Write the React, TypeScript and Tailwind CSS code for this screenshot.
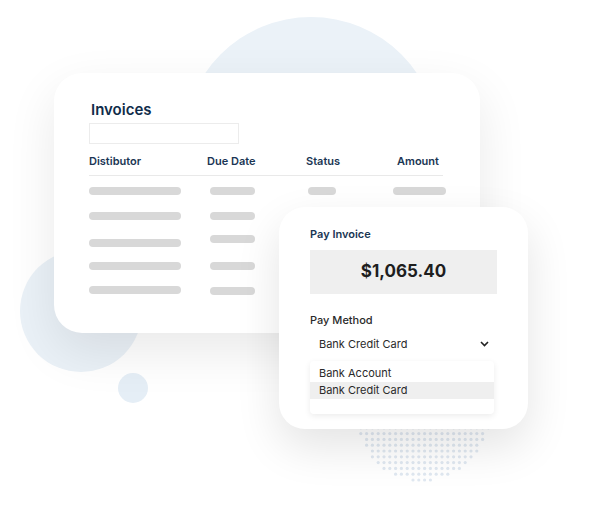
import React from "react";

type Row = { wrap: string; d: string; due: string; st: string; am: string };

const rows: Row[] = [
  { wrap: "mt-[11px]", d: "mt-0", due: "mt-0", st: "mt-0", am: "mt-0" },
  { wrap: "mt-[17px]", d: "mt-0", due: "mt-0", st: "mt-0", am: "mt-0" },
  { wrap: "mt-[15px]", d: "mt-[4px]", due: "mt-0", st: "mt-0", am: "mt-0" },
  { wrap: "mt-[15px]", d: "mt-0", due: "mt-0", st: "mt-0", am: "mt-0" },
  { wrap: "mt-[16px]", d: "mt-0", due: "mt-[1px]", st: "mt-[1px]", am: "mt-[1px]" },
];

function Dots() {
  const dots: React.ReactElement[] = [];
  const cx = 70;
  const cy = 52;
  const r = 67;
  for (let y = 2; y < 140; y += 5.8) {
    for (let x = 2; x < 140; x += 5.8) {
      const dx = x - cx;
      const dy = y - cy;
      if (dx * dx + dy * dy <= r * r) {
        dots.push(<circle key={`${x}-${y}`} cx={x} cy={y} r={1.6} fill="#e0e8f1" />);
      }
    }
  }
  return (
    <svg width="140" height="140" viewBox="0 0 140 140">
      {dots}
    </svg>
  );
}

const bar = "h-[8px] rounded-full bg-[#d8d8d8]";

export default function App() {
  return (
    <div
      className="relative w-[616px] h-[511px] overflow-hidden bg-white pl-[54px] pt-[73px]"
      style={{ fontFamily: "Inter, 'Noto Sans', sans-serif" }}
    >
      {/* decorative background shapes */}
      <div className="absolute left-[183px] top-[17px] w-[256px] h-[256px] rounded-full bg-[#ebf2f8]" />
      <div className="absolute left-[20px] top-[250px] w-[122px] h-[122px] rounded-full bg-[#eaf1f7]" />
      <div className="absolute left-[118px] top-[373px] w-[30px] h-[30px] rounded-full bg-[#e5eef6]" />
      <div className="absolute left-[353px] top-[362px]">
        <Dots />
      </div>

      {/* Invoices card */}
      <div className="relative w-[426px] h-[260px] rounded-[28px] bg-white shadow-[0_18px_50px_rgba(0,0,0,0.09)] pl-[35px] pt-[27px]">
        <div className="text-[15px] leading-[20px] font-semibold text-[#0f2c4a] ml-[2px]">Invoices</div>
        <div className="mt-[3px] w-[150px] h-[21px] border border-[#ececec]" />
        <div className="mt-[10px] w-[354px] grid grid-cols-[118px_99px_91px_1fr] text-[11px] leading-[14px] font-semibold text-[#1a3654] pb-[7px] border-b border-[#e9e9e9]">
          <span>Distibutor</span>
          <span>Due Date</span>
          <span>Status</span>
          <span>Amount</span>
        </div>
        <div className="flex flex-col w-[354px]">
          {rows.map((r, i) => (
            <div key={i} className={`grid grid-cols-[118px_99px_91px_1fr] items-start ${r.wrap}`}>
              <div className={`${bar} w-[92px] ${r.d}`} />
              <div className={`${bar} w-[45px] ml-[3px] ${r.due}`} />
              <div className={`${bar} w-[28px] ml-[2px] ${r.st}`} />
              <div className={`${bar} w-[53px] -ml-[4px] ${r.am}`} />
            </div>
          ))}
        </div>
      </div>

      {/* Pay invoice card */}
      <div className="absolute left-[279px] top-[207px] w-[249px] h-[222px] rounded-[26px] bg-white shadow-[0_18px_45px_rgba(0,0,0,0.11)] px-[31px] pt-[20px]">
        <div className="text-[11px] leading-[14px] font-semibold text-[#1a3654]">Pay Invoice</div>
        <div className="mt-[9px] h-[44px] bg-[#efefef] flex items-center justify-center text-[17px] font-bold text-[#1e1e1e]">
          $1,065.40
        </div>
        <div className="mt-[19px] text-[11px] leading-[14px] font-medium text-[#2a2a2a]">Pay Method</div>
        <div className="mt-[10px] h-[14px] flex items-center justify-between pl-[9px] pr-[8px] text-[11px] text-[#2a2a2a]">
          <span>Bank Credit Card</span>
          <svg width="9" height="6" viewBox="0 0 9 6" fill="none">
            <path d="M1 1l3.5 3.5L8 1" stroke="#222" strokeWidth="1.6" />
          </svg>
        </div>
        <div className="mt-[10px] w-[184px] h-[53px] rounded-[4px] bg-white shadow-[0_2px_6px_rgba(0,0,0,0.08)] pt-[4px] text-[11px] text-[#2a2a2a]">
          <div className="h-[17px] leading-[17px] pl-[9px]">Bank Account</div>
          <div className="h-[17px] leading-[17px] pl-[9px] bg-[#efefef]">Bank Credit Card</div>
        </div>
      </div>
    </div>
  );
}
